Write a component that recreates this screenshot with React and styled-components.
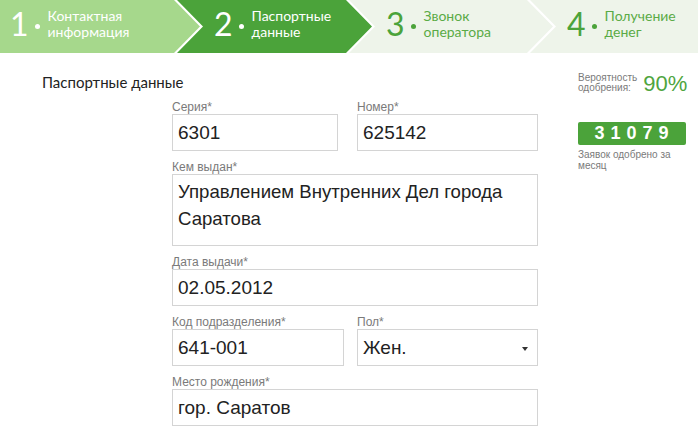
import React from "react";
import styled, { createGlobalStyle } from "styled-components";

const GlobalStyle = createGlobalStyle`
  body {
    margin: 0;
    background: #ffffff;
    font-family: "Liberation Sans", Arial, sans-serif;
  }
`;

const TIP = 26;

const colors = {
  done: { bg: "#a6d88c", num: "#ffffff", text: "#ffffff" },
  active: { bg: "#4ba33a", num: "#ffffff", text: "#ffffff" },
  todo: { bg: "#eef4ea", num: "#4ba33a", text: "#5aab46" },
};

const Steps = styled.div`
  display: flex;
  height: 53px;
  width: 698px;
`;

const Step = styled.div`
  flex: 0 0 ${props => props.width}px;
  margin-left: ${props => (props.first ? 0 : -23)}px;
  padding-left: ${props => (props.first ? 10 : 37)}px;
  padding-bottom: 5px;
  box-sizing: border-box;
  display: flex;
  align-items: center;
  background: ${props => colors[props.state].bg};
  clip-path: ${props =>
    props.first
      ? `polygon(0 0, calc(100% - ${TIP}px) 0, 100% 50%, calc(100% - ${TIP}px) 100%, 0 100%)`
      : props.last
      ? `polygon(0 0, 100% 0, 100% 100%, 0 100%, ${TIP}px 50%)`
      : `polygon(0 0, calc(100% - ${TIP}px) 0, 100% 50%, calc(100% - ${TIP}px) 100%, 0 100%, ${TIP}px 50%)`};
  font-family: Lato, "Open Sans", sans-serif;
`;

const StepNum = styled.span`
  font-size: 32px;
  line-height: 1;
  color: ${props => colors[props.state].num};
`;

const StepDot = styled.span`
  width: 5px;
  height: 5px;
  border-radius: 50%;
  margin: 4px 8px 0 6px;
  background: ${props => colors[props.state].num};
`;

const StepText = styled.span`
  font-size: 14px;
  line-height: 16px;
  color: ${props => colors[props.state].text};
  white-space: pre-line;
`;

const Content = styled.div`
  display: flex;
  padding-top: 21px;
`;

const Main = styled.div`
  flex: 1;
`;

const Heading = styled.h2`
  margin: 0 0 9px 42px;
  font-family: Lato, "Open Sans", sans-serif;
  font-size: 15px;
  line-height: 17px;
  font-weight: 400;
  color: #222222;
`;

const Form = styled.div`
  margin-left: 172px;
  width: 366px;
`;

const Row = styled.div`
  display: flex;
  justify-content: space-between;
`;

const Field = styled.div`
  width: ${props => (props.width ? `${props.width}px` : "100%")};
  margin-bottom: 9px;
`;

const Label = styled.div`
  font-size: 12px;
  line-height: 14px;
  color: #7a7a7a;
`;

const Input = styled.input`
  display: block;
  width: 100%;
  height: 37px;
  box-sizing: border-box;
  border: 1px solid #d4d4d4;
  padding: 0 5px;
  font-family: "Liberation Sans", Arial, sans-serif;
  font-size: 19px;
  color: #222222;
  background: #ffffff;
  outline: none;
`;

const TextArea = styled.textarea`
  display: block;
  width: 100%;
  height: 72px;
  box-sizing: border-box;
  border: 1px solid #d4d4d4;
  padding: 3px 5px;
  font-family: "Liberation Sans", Arial, sans-serif;
  font-size: 18.6px;
  line-height: 27px;
  color: #222222;
  resize: none;
  overflow: hidden;
  outline: none;
`;

const SelectBox = styled.div`
  position: relative;
  height: 37px;
  box-sizing: border-box;
  border: 1px solid #d4d4d4;
  padding: 0 5px;
  display: flex;
  align-items: center;
  font-size: 19px;
  color: #222222;
  &::after {
    content: "";
    position: absolute;
    right: 9px;
    top: 17px;
    border-left: 3px solid transparent;
    border-right: 3px solid transparent;
    border-top: 4px solid #333333;
  }
`;

const Sidebar = styled.div`
  width: 110px;
  margin: -5px 12px 0 0;
  align-self: flex-start;
`;

const Chance = styled.div`
  display: flex;
  align-items: center;
`;

const SmallText = styled.div`
  font-size: 10px;
  line-height: 10px;
  color: #7a7a7a;
`;

const Percent = styled.div`
  font-size: 22px;
  color: #4fa53e;
  margin-left: 6px;
  margin-top: 2px;
`;

const Counter = styled.div`
  margin-top: 25px;
  height: 23px;
  width: 108px;
  border-radius: 2px;
  background: #4ba33a;
  color: #ffffff;
  font-size: 18px;
  font-weight: 700;
  letter-spacing: 6px;
  text-align: center;
  line-height: 23px;
  padding-left: 5px;
  box-sizing: border-box;
`;

const CounterNote = styled(SmallText)`
  margin-top: 4px;
  line-height: 11px;
`;

const steps = [
  { n: 1, text: "Контактная\nинформация", state: "done", width: 200 },
  { n: 2, text: "Паспортные\nданные", state: "active", width: 195 },
  { n: 3, text: "Звонок\nоператора", state: "todo", width: 204 },
  { n: 4, text: "Получение\nденег", state: "todo", width: 168 },
];

export default function App() {
  return (
    <>
      <GlobalStyle />
      <Steps>
        {steps.map((s, i) =>
          <Step
            key={s.n}
            state={s.state}
            width={s.width}
            first={i === 0}
            last={i === steps.length - 1}
          >
            <StepNum state={s.state}>{s.n}</StepNum>
            <StepDot state={s.state} />
            <StepText state={s.state}>{s.text}</StepText>
          </Step>
        )}
      </Steps>
      <Content>
        <Main>
          <Heading>Паспортные данные</Heading>
          <Form>
            <Row>
              <Field width={166}>
                <Label>Серия*</Label>
                <Input readOnly value="6301" />
              </Field>
              <Field width={181}>
                <Label>Номер*</Label>
                <Input readOnly value="625142" />
              </Field>
            </Row>
            <Field>
              <Label>Кем выдан*</Label>
              <TextArea
                readOnly
                value="Управлением Внутренних Дел города Саратова"
              />
            </Field>
            <Field>
              <Label>Дата выдачи*</Label>
              <Input readOnly value="02.05.2012" />
            </Field>
            <Row>
              <Field width={172}>
                <Label>Код подразделения*</Label>
                <Input readOnly value="641-001" />
              </Field>
              <Field width={181}>
                <Label>Пол*</Label>
                <SelectBox>Жен.</SelectBox>
              </Field>
            </Row>
            <Field>
              <Label>Место рождения*</Label>
              <Input readOnly value="гор. Саратов" />
            </Field>
          </Form>
        </Main>
        <Sidebar>
          <Chance>
            <SmallText>Вероятность<br />одобрения:</SmallText>
            <Percent>90%</Percent>
          </Chance>
          <Counter>31079</Counter>
          <CounterNote>Заявок одобрено за месяц</CounterNote>
        </Sidebar>
      </Content>
    </>
  );
}
